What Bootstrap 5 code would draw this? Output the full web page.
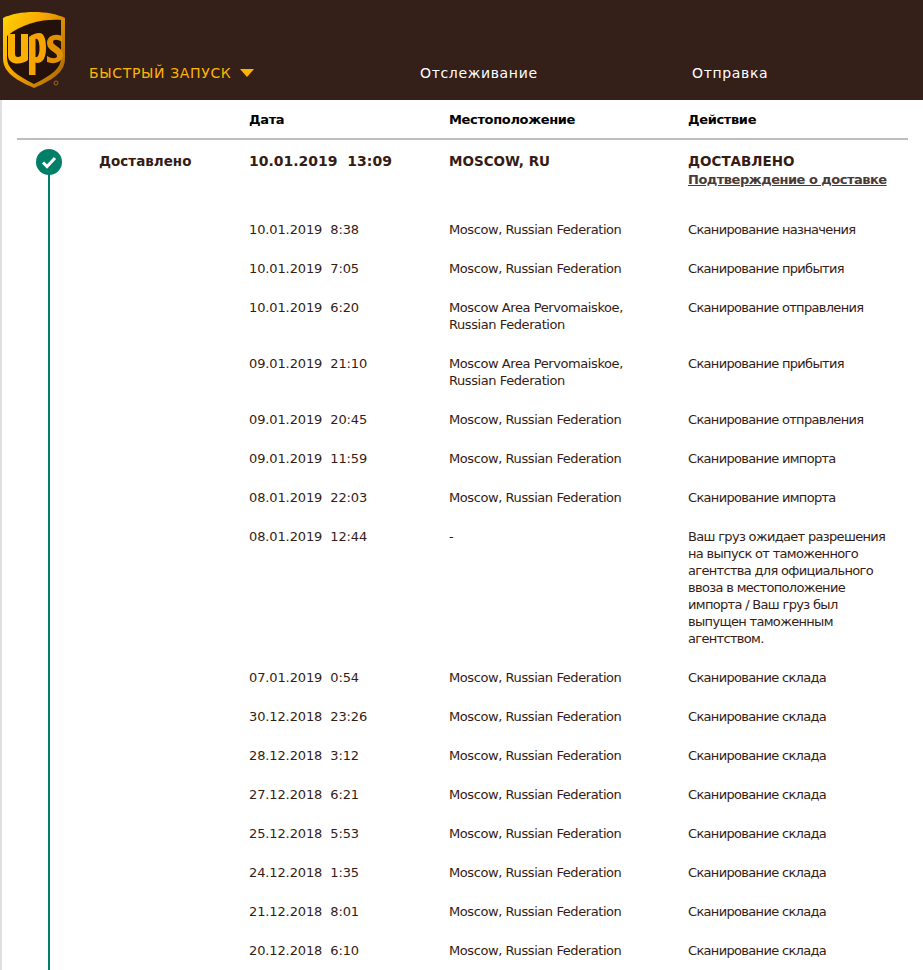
<!DOCTYPE html>
<html lang="ru">
<head>
  <meta charset="UTF-8" />
  <meta name="viewport" content="width=device-width, initial-scale=1.0" />
  <title>UPS Tracking</title>
  <link href="https://cdn.jsdelivr.net/npm/bootstrap@5.3.0/dist/css/bootstrap.min.css" rel="stylesheet">
  <style>
    html, body { height: 970px; overflow: hidden; }
    body {
      background: #fff;
      font-family: "DejaVu Sans", sans-serif;
      font-size: 13px;
      line-height: 17px;
      color: #351c15;
    }
    .ups-bar { height: 100px; background: #351f19; }
    .ups-logo { width: 66px; height: 78px; margin: 11px 0 0 1px; flex: none; }
    .ups-quick { width: 353px; padding: 65px 0 0 22px; color: #ffb500; font-size: 14px; letter-spacing: .65px; flex: none; }
    .ups-tri { width: 0; height: 0; border-left: 7px solid transparent; border-right: 7px solid transparent; border-top: 8px solid #ffb500; margin: 4px 0 0 9px; }
    .ups-link { color: #fff; font-size: 14px; letter-spacing: .65px; padding-top: 65px; }
    .ups-track { width: 272px; }
    .ups-body { border-left: 2px solid #e0e0e0; padding-right: 15px; position: relative; height: 870px; overflow: hidden; }
    .ups-head { margin-left: 15px; height: 40px; border-bottom: 2px solid #bdbdbd; padding-top: 11px; font-weight: 700; font-size: 13px; color: #000; }
    .ups-row { margin-left: 15px; padding: 11px 0; }
    .ups-first { padding: 13px 0 22px; font-weight: 700; font-size: 13.5px; }
    .ups-c0 { width: 232px; flex: none; padding-left: 82px; }
    .ups-c1 { width: 200px; flex: none; white-space: pre; letter-spacing: -.12px; }
    .ups-c2 { width: 239px; flex: none; padding-right: 55px; letter-spacing: -.42px; }
    .ups-c3 { width: 205px; flex: none; letter-spacing: -.68px; }
    .ups-head > div { letter-spacing: -.35px; }
    .ups-first .ups-c0 { letter-spacing: 0; }
    .ups-first .ups-c1 { font-size: 14px; letter-spacing: 0; }
    .ups-first .ups-c2, .ups-first .ups-c3 { letter-spacing: 0; }
    .ups-first .ups-c3 .ups-doc { display: block; margin-top: 1px; font-size: 13px; letter-spacing: -.5px; white-space: nowrap; color: #4a3b36; text-decoration: underline; }
    .ups-line { position: absolute; left: 46px; top: 70px; bottom: 0; width: 2px; background: #007f68; }
    .ups-dot { position: absolute; left: 34px; top: 49px; width: 26px; height: 26px; }
  </style>
</head>
<body>
  <div class="ups-bar d-flex">
    <svg class="ups-logo" viewBox="0 0 66 78">
      <defs>
        <linearGradient id="g1" x1="0" y1="0" x2="1" y2="0.7">
          <stop offset="0" stop-color="#ffd500"/><stop offset=".45" stop-color="#f9a800"/><stop offset="1" stop-color="#b56f00"/>
        </linearGradient>
      </defs>
      <path d="M33 1C21 1 10 3 2 7V47C2 60 12 68 33 77C54 68 64 60 64 47V7C56 3 45 1 33 1Z" fill="url(#g1)"/>
      <path d="M60 9V47C60 57 51 64 33 73C15 64 6 57 6 47V25C22 12 42 8 60 9Z" fill="#24110c"/>
      <path d="M7 23H14V43C14 46 17 47 20 45V23H27V49C21 54 7 55 7 44Z" fill="#fbb000"/>
      <path d="M28 26C32 23 35 22 38 22C44 22 45 30 45 37C45 46 42 52 36 52L34.5 51.5V64H28ZM34.5 28V46C37 47 38.5 43 38.5 37C38.5 31 37 27 34.5 28Z" fill="#f5a400" fill-rule="evenodd"/>
      <path d="M61 25V31C57 28 52 28 52 31C52 35 62 36 62 44C62 51 53 54 46 51V45C51 48 56 48 56 45C56 41 46 40 46 32C46 24 55 22 61 25Z" fill="#e09200"/>
      <circle cx="55" cy="72" r="2" fill="none" stroke="#a5651a" stroke-width="1"/>
    </svg>
    <div class="ups-quick d-flex"><span>БЫСТРЫЙ ЗАПУСК</span><span class="ups-tri"></span></div>
    <div class="ups-link ups-track">Отслеживание</div>
    <div class="ups-link">Отправка</div>
  </div>
  <div class="ups-body" id="ups-body">
    <div class="ups-line"></div>
    <svg class="ups-dot" viewBox="0 0 26 26"><circle cx="13" cy="13" r="13" fill="#007f68"/><path d="M7 13.5l4 4 8-8.5" fill="none" stroke="#fff" stroke-width="3"/></svg>
    <div class="ups-head d-flex"><div class="ups-c0"></div><div class="ups-c1">Дата</div><div class="ups-c2">Местоположение</div><div class="ups-c3">Действие</div></div>
    <div class="ups-row ups-first d-flex">
      <div class="ups-c0">Доставлено</div>
      <div class="ups-c1">10.01.2019  13:09</div>
      <div class="ups-c2">MOSCOW, RU</div>
      <div class="ups-c3">ДОСТАВЛЕНО<span class="ups-doc">Подтверждение о доставке</span></div>
    </div>
    <div id="ups-rows"></div>
  </div>
  <script src="https://cdn.jsdelivr.net/npm/bootstrap@5.3.0/dist/js/bootstrap.bundle.min.js"></script>
  <script>
    const M = 'Moscow, Russian Federation';
    const A = 'Moscow Area Pervomaiskoe, Russian Federation';
    const W = 'Сканирование склада';
    const rows = [
      ['10.01.2019  8:38', M, 'Сканирование назначения'],
      ['10.01.2019  7:05', M, 'Сканирование прибытия'],
      ['10.01.2019  6:20', A, 'Сканирование отправления'],
      ['09.01.2019  21:10', A, 'Сканирование прибытия'],
      ['09.01.2019  20:45', M, 'Сканирование отправления'],
      ['09.01.2019  11:59', M, 'Сканирование импорта'],
      ['08.01.2019  22:03', M, 'Сканирование импорта'],
      ['08.01.2019  12:44', '-', 'Ваш груз ожидает разрешения на выпуск от таможенного агентства для официального ввоза в местоположение импорта / Ваш груз был выпущен таможенным агентством.'],
      ['07.01.2019  0:54', M, W],
      ['30.12.2018  23:26', M, W],
      ['28.12.2018  3:12', M, W],
      ['27.12.2018  6:21', M, W],
      ['25.12.2018  5:53', M, W],
      ['24.12.2018  1:35', M, W],
      ['21.12.2018  8:01', M, W],
      ['20.12.2018  6:10', M, W]
    ];
    document.getElementById('ups-rows').innerHTML = rows.map(r => `
      <div class="ups-row d-flex">
        <div class="ups-c0"></div>
        <div class="ups-c1">${r[0]}</div>
        <div class="ups-c2">${r[1]}</div>
        <div class="ups-c3">${r[2]}</div>
      </div>`).join('');
  </script>
</body>
</html>
